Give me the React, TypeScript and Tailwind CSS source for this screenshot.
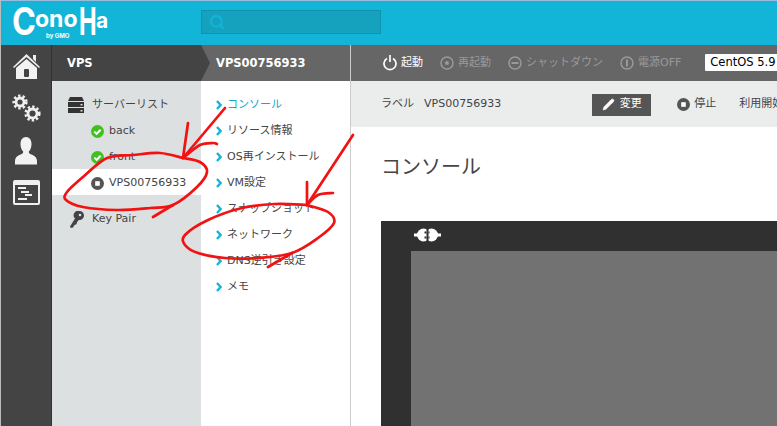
import React from 'react';
import { Search, Pencil } from 'lucide-react';

const smooth = (pts: number[][]) => {
    let d = `M${pts[0][0]} ${pts[0][1]}`;
    for (let i = 0; i < pts.length - 1; i++) {
        const p0 = pts[Math.max(i - 1, 0)];
        const p1 = pts[i];
        const p2 = pts[i + 1];
        const p3 = pts[Math.min(i + 2, pts.length - 1)];
        d += ` C${p1[0] + (p2[0] - p0[0]) / 6} ${p1[1] + (p2[1] - p0[1]) / 6} ${p2[0] - (p3[0] - p1[0]) / 6} ${p2[1] - (p3[1] - p1[1]) / 6} ${p2[0]} ${p2[1]}`;
    }
    return d;
};

const strokes: number[][][] = [
    // left circle and its arrow
    [[183, 158], [160, 153], [133, 155], [107, 158], [83, 177], [67, 192], [66, 200], [83, 207], [117, 210], [150, 208], [173, 205], [197, 187], [207, 172], [200, 162], [183, 158]],
    [[173, 205], [153, 217]],
    [[225, 108], [183, 158]],
    [[188, 123], [183, 158]],
    [[183, 158], [200, 145], [213, 143], [217, 144]],
    // right circle and its arrow
    [[307, 205], [275, 204], [242, 208], [208, 220], [185, 235], [185, 245], [198, 253], [225, 258], [258, 258], [292, 253], [318, 238], [334, 223], [328, 212], [307, 205]],
    [[292, 253], [268, 267]],
    [[353, 135], [307, 205]],
    [[307, 182], [307, 205]],
    [[307, 205], [318, 195], [333, 193]],
];

const Chevron = () => (
    <svg width="6" height="10" viewBox="0 0 6 10" className="shrink-0">
        <path d="M1 1l3.600 4L1 9" fill="none" stroke="#12b5d8" strokeWidth="2.400" />
    </svg>
);

const Check = () => (
    <svg width="13" height="13" viewBox="0 0 13 13" className="shrink-0">
        <circle cx="6.500" cy="6.500" r="6.500" fill="#3fc11f" />
        <path d="M3.300 6.600l2.300 2.300 4-4.200" fill="none" stroke="#fff" strokeWidth="2" />
    </svg>
);

const StopIcon = () => (
    <svg width="13" height="13" viewBox="0 0 13 13" className="shrink-0">
        <circle cx="6.500" cy="6.500" r="6.500" fill="#555" />
        <rect x="4.200" y="4.200" width="4.600" height="4.600" fill="#fff" />
    </svg>
);

const Gear = ({ x, y, r }: { x: number; y: number; r: number }) => (
    <g fill="none" stroke="#f0f0f0">
        <circle cx={x} cy={y} r={r} strokeWidth="2.800" />
        <circle cx={x} cy={y} r={r + 2.300} strokeWidth="2.600" strokeDasharray="2.400 2.100" />
    </g>
);

const RailIcons = () => (
    <div className="flex flex-col items-center gap-[15px] pt-[9px]">
        <svg width="27" height="25" viewBox="0 0 27 25">
            <path d="M20 1h3v7l-3-3z" fill="#eee" />
            <path d="M13.500 0L27 13l-1 1L13.500 3 1 14l-1-1z" fill="#eee" />
            <path d="M13.500 5L24 14v11H3V14z" fill="#f2f2f2" />
            <rect x="11" y="15" width="5" height="8" rx="1" fill="#444" />
        </svg>
        <svg width="29" height="28" viewBox="0 0 29 28">
            <Gear x={8} y={8} r={4} />
            <Gear x={20.500} y={19.500} r={4.500} />
        </svg>
        <svg width="22" height="28" viewBox="0 0 22 26" preserveAspectRatio="none">
            <path d="M11 0c3.500 0 5.500 2.800 5.500 6.500 0 3-1 5.500-2.700 7 0 1.200.6 2 2 2.600 3.500 1.300 5.700 2.500 6.200 5.900v3.500H0V22c.5-3.400 2.700-4.600 6.200-5.900 1.400-.6 2-1.400 2-2.600-1.700-1.500-2.700-4-2.700-7C5.500 2.800 7.500 0 11 0z" fill="#f2f2f2" />
        </svg>
        <svg width="27" height="25" viewBox="0 0 27 25">
            <rect width="27" height="25" rx="2" fill="#f0f0f0" />
            <rect x="2" y="5" width="23" height="18" fill="#444" />
            <rect x="5" y="7" width="8" height="2" fill="#f0f0f0" />
            <rect x="8" y="11" width="8" height="2" fill="#f0f0f0" />
            <rect x="12" y="14" width="7" height="2" fill="#f0f0f0" />
            <rect x="5" y="18" width="9" height="2" fill="#f0f0f0" />
        </svg>
    </div>
);

const ServerIcon = () => (
    <svg width="16" height="16" viewBox="0 0 16 16" className="shrink-0">
        <path d="M2 0h12l2 4H0z" fill="#333" />
        <rect y="5" width="16" height="5" fill="#333" />
        <rect y="11" width="16" height="5" fill="#333" />
        <rect x="12.500" y="7" width="2" height="1.500" fill="#ddd" />
        <rect x="12.500" y="13" width="2" height="1.500" fill="#ddd" />
    </svg>
);

const KeyIcon = () => (
    <svg width="14" height="17" viewBox="0 0 14 17" className="shrink-0">
        <path d="M9.500 0A4.500 4.500 0 0 1 14 4.500c0 2.700-2.200 4.500-4.500 4.500l-1 .2-1.500 2-.5 2-2 .8L3 16.500 0.800 17 0 15.500 5 7.500A4.500 4.500 0 0 1 9.500 0z" fill="#444" />
        <circle cx="10" cy="4" r="1.300" fill="#dde0e1" />
    </svg>
);

const tools = [
    { label: '再起動', d: <circle cx="7" cy="7" r="2" fill="#999" /> },
    { label: 'シャットダウン', d: <rect x="3.500" y="6" width="7" height="2" fill="#999" /> },
    { label: '電源OFF', d: <rect x="6" y="3.500" width="2" height="7" fill="#999" /> },
];

const menu = ['コンソール', 'リソース情報', 'OS再インストール', 'VM設定', 'スナップショット', 'ネットワーク', 'DNS逆引き設定', 'メモ'];

export default function App() {
    return (
        <div className="relative w-[777px] h-[426px] overflow-hidden bg-white flex flex-col text-[11px] text-[#444] whitespace-nowrap border-l border-t border-l-[#bbb] border-t-[#9bd] font-['DejaVu_Sans','Noto_Sans_CJK_JP',sans-serif]">
            {/* top bar */}
            <div className="h-[44px] shrink-0 bg-[#12b5d8] flex items-center">
                <div className="w-[200px] h-full relative text-white font-['Inter',sans-serif] font-bold leading-none">
                    <div className="flex items-start pl-[11px] *:leading-none">
                        <span className="text-[38px] mt-[1px] w-[23px] inline-block origin-left scale-x-[.85]">C</span>
                        <span className="text-[23px] mt-[7px] w-[44px]">ono</span>
                        <span className="text-[38px] mt-[1px] w-[17px] inline-block origin-left scale-x-[.62]">H</span>
                        <span className="text-[21px] mt-[9px]">a</span>
                    </div>
                    <span className="absolute left-[45px] top-[31px] text-[6px] leading-[7px]">by GMO</span>
                </div>
                <div className="w-[180px] h-[24px] -mt-[3px] bg-[#14a2bf] border border-[#0f93ae] flex items-center pl-[7px]">
                    <Search size={16} strokeWidth={3} className="text-[#12b5d8]" />
                </div>
            </div>

            <div className="flex flex-1 min-h-0">
                {/* icon rail */}
                <div className="w-[51px] shrink-0 bg-[#444] border-r border-[#333]">
                    <RailIcons />
                </div>

                {/* server list */}
                <div className="w-[149px] shrink-0 flex flex-col bg-[#dde0e1]">
                    <div className="h-[36px] bg-[#444] text-white font-bold text-[11.5px] leading-[36px] pl-[15px]">VPS</div>
                    <div className="flex flex-col pt-[10px] *:pt-[2px]">
                        <div className="h-[26px] flex items-center pl-[16px] gap-[8px]"><ServerIcon />サーバーリスト</div>
                        <div className="h-[26px] flex items-center pl-[39px] gap-[5px]"><Check />back</div>
                        <div className="h-[26px] flex items-center pl-[39px] gap-[5px]"><Check />front</div>
                        <div className="h-[26px] flex items-center pl-[39px] gap-[5px] bg-white"><StopIcon />VPS00756933</div>
                        <div className="h-[26px] mt-[10px] flex items-center pl-[18px] gap-[8px]"><KeyIcon />Key Pair</div>
                    </div>
                </div>

                {/* server menu */}
                <div className="w-[150px] shrink-0 flex flex-col bg-white border-r border-[#ccc]">
                    <div className="relative h-[36px] bg-[#666] text-white font-bold text-[11.5px] leading-[36px] pl-[15px]">
                        <svg width="9" height="36" viewBox="0 0 9 36" className="absolute left-0 top-0">
                            <path d="M0 0l9 18-9 18z" fill="#444" />
                        </svg>
                        VPS00756933
                    </div>
                    <div className="flex flex-col pt-[10px] *:pt-[2px]">
                        {menu.map((m, i) => (
                            <div key={m} className={`h-[26px] flex items-center pl-[15px] gap-[5px] ${i === 0 ? 'text-[#12a8cc]' : ''}`}>
                                <Chevron />{m}
                            </div>
                        ))}
                    </div>
                </div>

                {/* main */}
                <div className="flex-1 min-w-0 flex flex-col">
                    <div className="h-[36px] shrink-0 bg-[#666] flex items-center pl-[32px] text-[#999] overflow-hidden *:shrink-0">
                        <svg width="14" height="16" viewBox="0 0 14 16" className="mr-[4px]">
                            <path d="M4 3.500a6 6 0 1 0 6 0" fill="none" stroke="#fff" strokeWidth="1.700" />
                            <path d="M7 0v7" stroke="#fff" strokeWidth="1.700" />
                        </svg>
                        <span className="text-white">起動</span>
                        {tools.map(t => (
                            <div key={t.label} className="flex items-center gap-[4px] ml-[17px] *:shrink-0">
                                <svg width="14" height="14" viewBox="0 0 14 14">
                                    <circle cx="7" cy="7" r="6" fill="none" stroke="#999" strokeWidth="1.500" />
                                    {t.d}
                                </svg>
                                {t.label}
                            </div>
                        ))}
                        <div className="ml-[24px] h-[17px] -mt-[1px] bg-white pl-[5px] pr-[8px] text-black text-[11.5px] leading-[17px] rounded-[1px]">CentOS 5.9</div>
                    </div>
                    <div className="h-[46px] shrink-0 bg-[#ebeded] flex items-center pl-[30px] pt-[1px] overflow-hidden *:shrink-0">
                        <span>ラベル</span>
                        <span className="ml-[10px]">VPS00756933</span>
                        <div className="ml-[91px] w-[59px] h-[22px] bg-[#555] text-white flex items-center justify-center gap-[5px]">
                            <Pencil size={13} fill="#fff" strokeWidth={1} className="shrink-0" />変更
                        </div>
                        <div className="ml-[26px] flex items-center gap-[4px]"><StopIcon />停止</div>
                        <span className="ml-[23px]">利用開始日</span>
                    </div>
                    <div className="flex-1 pl-[30px] overflow-hidden">
                        <h1 className="text-[20px] leading-[30px] text-[#444] mt-[25px] font-normal">コンソール</h1>
                        <div className="mt-[39px] w-[500px] h-[300px] bg-[#303030] pl-[30px] pt-[30px] relative">
                            <svg width="27" height="14" viewBox="0 0 27 14" className="absolute left-[33px] top-[7px]">
                                <rect x="0" y="5.500" width="5" height="3" fill="#fff" />
                                <rect x="22" y="5.500" width="5" height="3" fill="#fff" />
                                <circle cx="9.500" cy="7" r="6.500" fill="#fff" />
                                <circle cx="17.500" cy="7" r="6.500" fill="#fff" />
                                <rect x="12.500" y="0" width="2" height="14" fill="#303030" />
                                <rect x="10.500" y="3.500" width="2" height="2" fill="#303030" />
                                <rect x="10.500" y="8.500" width="2" height="2" fill="#303030" />
                                <rect x="14.500" y="3.500" width="1" height="2" fill="#303030" />
                                <rect x="14.500" y="8.500" width="1" height="2" fill="#303030" />
                            </svg>
                            <div className="w-full h-full bg-[#727272]" />
                        </div>
                    </div>
                </div>
            </div>

            {/* hand-drawn red annotations */}
            <svg width="777" height="426" viewBox="0 0 777 426" className="absolute -left-px -top-px pointer-events-none">
                {strokes.map((s, i) => (
                    <path key={i} d={smooth(s)} fill="none" stroke="#f21212" strokeWidth="2.700" strokeLinecap="round" strokeLinejoin="round" />
                ))}
            </svg>
        </div>
    );
}
